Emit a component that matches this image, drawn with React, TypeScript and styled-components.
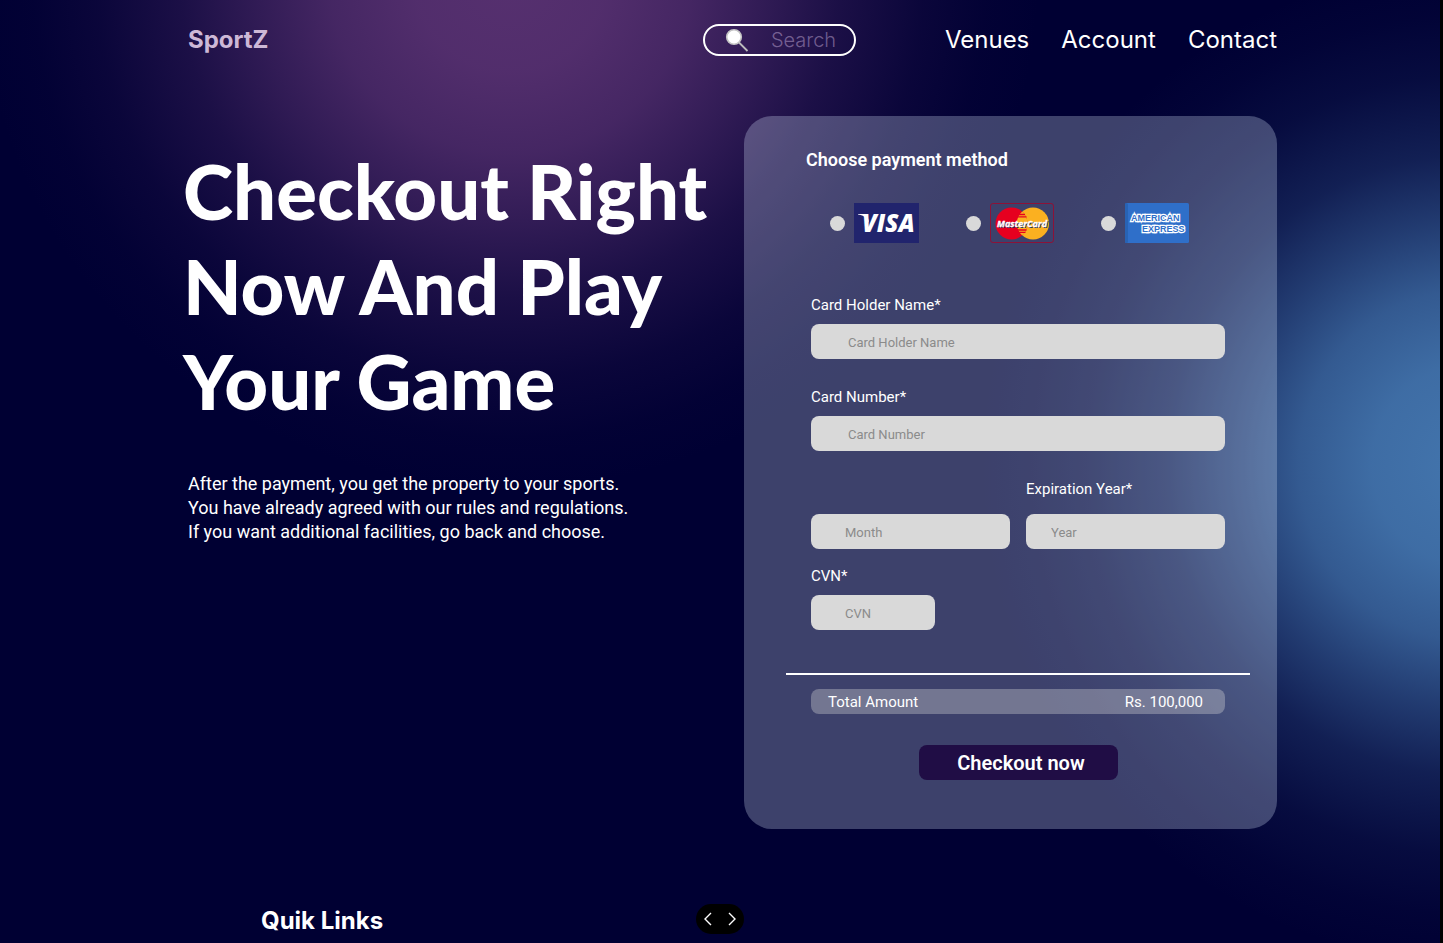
import React from 'react';
import styled, { createGlobalStyle } from 'styled-components';

const GlobalStyle = createGlobalStyle`
  *, *::before, *::after { box-sizing: border-box; }
  html { background: #000033; }
  body { margin: 0; font-family: Roboto, sans-serif; color: #fff; }
  h1, h2, p { margin: 0; }
`;

const Page = styled.div`
  min-height: 100vh;
  padding: 0 163px 0 188px;
  border-right: 3px solid #000;
  overflow: hidden;
  background:
    radial-gradient(ellipse 530px 510px at 510px -20px,
      rgba(86, 48, 111, 1) 0%, rgba(86, 48, 111, 0.95) 18%, rgba(86, 48, 111, 0.8) 34%,
      rgba(86, 48, 111, 0.57) 48%, rgba(86, 48, 111, 0.32) 62%, rgba(86, 48, 111, 0.12) 78%,
      rgba(86, 48, 111, 0.03) 90%, rgba(86, 48, 111, 0) 100%),
    radial-gradient(ellipse 490px 500px at calc(100% + 30px) 465px,
      rgba(67, 117, 173, 1) 0%, rgba(67, 117, 173, 0.93) 20%, rgba(67, 117, 173, 0.77) 35%,
      rgba(67, 117, 173, 0.5) 49%, rgba(67, 117, 173, 0.27) 62%, rgba(67, 117, 173, 0.1) 78%,
      rgba(67, 117, 173, 0.03) 90%, rgba(67, 117, 173, 0) 100%),
    #000033;

  @media (max-width: 1280px) {
    padding: 0 32px;
  }
`;

const Header = styled.header`
  display: flex;
  align-items: center;
  height: 80px;
  font-family: Inter, sans-serif;
`;

const Brand = styled.a`
  margin-right: auto;
  padding-bottom: 2px;
  font-size: 24px;
  font-weight: 700;
  color: #cdb8d6;
  text-decoration: none;
`;

const SearchBox = styled.label`
  display: flex;
  align-items: center;
  gap: 22px;
  width: 153px;
  height: 32px;
  padding: 0 8px 0 20px;
  border: 2px solid #fff;
  border-radius: 16px;

  svg { flex: none; }
`;

const SearchInput = styled.input`
  width: 100%;
  min-width: 0;
  padding: 0;
  border: 0;
  outline: 0;
  background: none;
  font: 300 20px Inter, sans-serif;
  color: #fff;

  &::placeholder { color: rgba(225, 200, 240, 0.42); opacity: 1; }
`;

const Nav = styled.nav`
  display: flex;
  gap: 32px;
  margin-left: 89px;
  padding-bottom: 2px;
`;

const NavLink = styled.a`
  font-size: 24px;
  font-weight: 400;
  color: #fff;
  text-decoration: none;
`;

const Main = styled.main`
  display: flex;
  justify-content: space-between;
  flex-wrap: wrap;
  padding-top: 36px;
`;

const Intro = styled.section`
  flex: 1 1 500px;
  padding-top: 27px;
`;

const Headline = styled.h1`
  margin-left: -5px;
  font: 900 76px/95px Lato, sans-serif;
  white-space: nowrap;
`;

const Lead = styled.p`
  margin-top: 44px;
  font-size: 18px;
  line-height: 24px;
`;

const Card = styled.form`
  display: flex;
  flex-direction: column;
  flex: 0 1 533px;
  padding: 32px 52px 49px 67px;
  border-radius: 28px;
  background: rgba(219, 234, 255, 0.28);
`;

const Methods = styled.fieldset`
  display: flex;
  gap: 47px;
  margin: 0 0 53px -5px;
  padding: 0 0 0 24px;
  border: 0;
`;

const MethodsTitle = styled.legend`
  margin: 0 0 31px -24px;
  padding: 0;
  font-size: 18px;
  line-height: 24px;
  font-weight: 600;
`;

const Method = styled.label`
  display: flex;
  align-items: center;
  gap: 9px;

  svg { display: block; }
`;

const Radio = styled.input`
  appearance: none;
  width: 15px;
  height: 15px;
  margin: 0;
  border-radius: 50%;
  background: #d9d9d9;

  &:checked { border: 4px solid #200d45; }
`;

const Fields = styled.div`
  display: grid;
  grid-template-columns: 1fr 1fr;
  column-gap: 16px;
`;

const Field = styled.div<{ $wide?: boolean; $gap?: number }>`
  display: flex;
  flex-direction: column;
  justify-content: flex-end;
  grid-column: ${(p) => (p.$wide ? '1 / -1' : 'auto')};
  gap: ${(p) => p.$gap ?? 10}px;
  margin-bottom: ${(p) => (p.$wide ? 29 : 18)}px;
`;

const Label = styled.label`
  font-size: 15px;
  line-height: 18px;
`;

const TextInput = styled.input<{ $indent: number; $short?: boolean }>`
  width: ${(p) => (p.$short ? '124px' : '100%')};
  height: 35px;
  padding: 2px 12px 0 ${(p) => p.$indent}px;
  border: 0;
  border-radius: 8px;
  background: #d9d9d9;
  font: 400 13px Roboto, sans-serif;
  color: #222;

  &::placeholder { color: #8b8b8b; opacity: 1; }
`;

const Divider = styled.hr`
  align-self: stretch;
  height: 2px;
  margin: 25px -25px 14px;
  border: 0;
  background: #fff;
`;

const Total = styled.div`
  display: flex;
  justify-content: space-between;
  padding: 1px 22px 0 17px;
  border-radius: 8px;
  background: rgba(217, 217, 217, 0.35);
  font-size: 15px;
  line-height: 24px;
`;

const CheckoutButton = styled.button`
  align-self: center;
  width: 199px;
  height: 35px;
  margin-top: 31px;
  padding: 0 0 0 6px;
  border: 0;
  border-radius: 8px;
  background: #200d45;
  font: 600 20px Roboto, sans-serif;
  color: #fff;
`;

const Footer = styled.footer`
  padding: 76px 0 0 73px;
`;

const FooterTitle = styled.h2`
  font: 700 24px/32px Inter, sans-serif;
`;

const Pager = styled.div`
  position: fixed;
  bottom: 9px;
  left: calc(50% - 2px);
  display: flex;
  width: 48px;
  height: 30px;
  transform: translateX(-50%);
  border-radius: 15px;
  background: #000;
`;

const PagerButton = styled.button`
  flex: 1;
  padding: 0;
  border: 0;
  background: none;
  color: #fff;

  svg { display: block; margin: auto; }
`;

const SearchIcon = () => (
  <svg width="24" height="24" viewBox="0 0 24 24" aria-hidden="true">
    <path d="M14 14.5 22.5 23" stroke="#bdbdbd" strokeWidth="1.8" />
    <circle cx="9" cy="9" r="7.3" fill="#fff" stroke="#c4c4c4" strokeWidth="1.6" />
  </svg>
);

const VisaLogo = () => (
  <svg width="65" height="40" viewBox="0 0 65 40" role="img" aria-label="Visa">
    <rect width="65" height="40" fill="#21246d" />
    <path d="M4 11h9l2.2 9-3-4.800Q9.500 12.200 4 11.400Z" fill="#fff" />
    <text x="8" y="29" fill="#fff" fontFamily="Open Sans, sans-serif" fontSize="24" fontWeight="800" fontStyle="italic">
      VISA
    </text>
  </svg>
);

const MasterCardLogo = () => (
  <svg width="64" height="40" viewBox="0 0 64 40" role="img" aria-label="MasterCard">
    <rect x=".5" y=".5" width="63" height="39" rx="2.500" fill="none" stroke="#8c1238" />
    <circle cx="43" cy="20.500" r="16" fill="#fbb020" />
    <circle cx="21.500" cy="20.500" r="16" fill="#e6001f" />
    <path d="M32.200 8.500a16 16 0 0 1 0 24 16 16 0 0 1 0-24Z" fill="#fbb020" />
    <path d="M29 11.500h6M28 13.800h8.500M27.500 27h9M28.500 29.400h7" stroke="#e6001f" strokeWidth="1.300" />
    <text x="8" y="25" fill="#26305e" fontFamily="Open Sans, sans-serif" fontSize="9" fontWeight="700" fontStyle="italic" aria-hidden="true">
      MasterCard
    </text>
    <text x="7" y="24" fill="#fff" stroke="#fff" strokeWidth=".3" fontFamily="Open Sans, sans-serif" fontSize="9" fontWeight="700" fontStyle="italic">
      MasterCard
    </text>
  </svg>
);

const AmexLogo = () => (
  <svg width="64" height="40" viewBox="0 0 64 40" role="img" aria-label="American Express">
    <rect width="64" height="40" rx="1.500" fill="#2f6fc9" />
    <rect width="3" height="40" rx="1.500" fill="#2863b4" />
    <g fill="#2f6fc9" stroke="#fff" strokeWidth="2.400" paintOrder="stroke" fontFamily="Liberation Sans, sans-serif" fontSize="9" fontWeight="700">
      <text x="6" y="18">AMERICAN</text>
      <text x="17" y="29">EXPRESS</text>
    </g>
  </svg>
);

const Chevron = ({ d }: { d: string }) => (
  <svg width="12" height="14" viewBox="0 0 12 14" fill="none" stroke="currentColor" strokeWidth="1.400" aria-hidden="true">
    <path d={d} />
  </svg>
);

export default function App() {
  return (
    <Page>
      <GlobalStyle />
      <Header>
        <Brand href="#">SportZ</Brand>
        <SearchBox>
          <SearchIcon />
          <SearchInput type="text" placeholder="Search" aria-label="Search" />
        </SearchBox>
        <Nav>
          <NavLink href="#venues">Venues</NavLink>
          <NavLink href="#account">Account</NavLink>
          <NavLink href="#contact">Contact</NavLink>
        </Nav>
      </Header>

      <Main>
        <Intro>
          <Headline>
            Checkout Right
            <br />
            Now And Play
            <br />
            Your Game
          </Headline>
          <Lead>
            After the payment, you get the property to your sports.
            <br />
            You have already agreed with our rules and regulations.
            <br />
            If you want additional facilities, go back and choose.
          </Lead>
        </Intro>

        <Card onSubmit={(e) => e.preventDefault()}>
          <Methods>
            <MethodsTitle>Choose payment method</MethodsTitle>
            <Method>
              <Radio type="radio" name="method" value="visa" />
              <VisaLogo />
            </Method>
            <Method>
              <Radio type="radio" name="method" value="mastercard" />
              <MasterCardLogo />
            </Method>
            <Method>
              <Radio type="radio" name="method" value="amex" />
              <AmexLogo />
            </Method>
          </Methods>

          <Fields>
            <Field $wide>
              <Label htmlFor="holder">Card Holder Name*</Label>
              <TextInput id="holder" placeholder="Card Holder Name" $indent={37} />
            </Field>
            <Field $wide>
              <Label htmlFor="number">Card Number*</Label>
              <TextInput id="number" placeholder="Card Number" inputMode="numeric" $indent={37} />
            </Field>
            <Field>
              <TextInput placeholder="Month" aria-label="Expiration month" $indent={34} />
            </Field>
            <Field $gap={16}>
              <Label htmlFor="year">Expiration Year*</Label>
              <TextInput id="year" placeholder="Year" $indent={25} />
            </Field>
            <Field>
              <Label htmlFor="cvn">CVN*</Label>
              <TextInput id="cvn" placeholder="CVN" inputMode="numeric" $indent={34} $short />
            </Field>
          </Fields>

          <Divider />
          <Total>
            <span>Total Amount</span>
            <span>Rs. 100,000</span>
          </Total>
          <CheckoutButton type="submit">Checkout now</CheckoutButton>
        </Card>
      </Main>

      <Footer>
        <FooterTitle>Quik Links</FooterTitle>
      </Footer>

      <Pager>
        <PagerButton type="button" aria-label="Previous">
          <Chevron d="M9 1 3 7l6 6" />
        </PagerButton>
        <PagerButton type="button" aria-label="Next">
          <Chevron d="m3 1 6 6-6 6" />
        </PagerButton>
      </Pager>
    </Page>
  );
}
